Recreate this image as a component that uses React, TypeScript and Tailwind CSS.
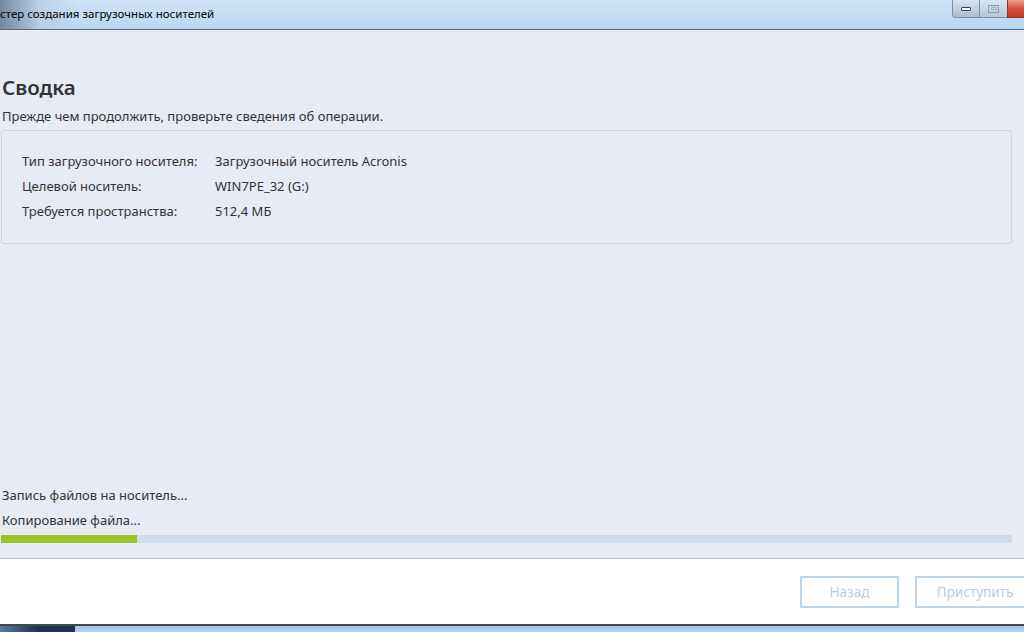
import React from 'react'

const rows = [
  { label: 'Тип загрузочного носителя:', value: 'Загрузочный носитель Acronis' },
  { label: 'Целевой носитель:', value: 'WIN7PE_32 (G:)' },
  { label: 'Требуется пространства:', value: '512,4 МБ' },
]

function TitleBar() {
  return (
    <div className="relative flex h-[30px] shrink-0 items-center border-b border-[#5b6a7c] bg-gradient-to-b from-[#cfe4f7] to-[#b9d7f2]">
      <div className="absolute inset-y-0 left-0 w-[80px] bg-gradient-to-r from-[#4f6580] via-[#b4cbe2] to-transparent opacity-70" />
      <span className="relative -mt-[1px] text-[11.5px] text-black">стер создания загрузочных носителей</span>
      <div className="absolute right-0 top-0 flex h-[18px]">
        <div className="flex w-[27px] items-center justify-center rounded-bl-[4px] border-b border-l border-[#7d8ea3] bg-gradient-to-b from-[#d7e6f3] to-[#a9bdd1]">
          <div className="h-[4px] w-[10px] rounded-[1px] border border-[#34475c] bg-white" />
        </div>
        <div className="flex w-[28px] items-center justify-center border-b border-l border-[#7d8ea3] bg-gradient-to-b from-[#d7e6f3] to-[#b4c6d8]">
          <div className="flex h-[8px] w-[11px] items-center justify-center border border-[#8d9db0]">
            <div className="h-[3px] w-[6px] border border-[#a5b3c3]" />
          </div>
        </div>
        <div className="w-[17px] border-b border-l border-[#8a3a2a] bg-gradient-to-b from-[#e8a08e] via-[#d4503a] to-[#c23a24]" />
      </div>
    </div>
  )
}

export default function App() {
  return (
    <div
      className="flex h-[632px] w-[1024px] flex-col overflow-hidden bg-[#e7ebf4] text-[#333]"
      style={{ fontFamily: '"Noto Sans", "Open Sans", sans-serif' }}
    >
      <TitleBar />

      <div className="flex min-h-0 flex-1 flex-col border-b border-[#b9bec6] pr-[12px]">
        <h1 className="mt-[43px] pl-[2px] text-[20.5px] font-semibold leading-[28px] text-[#333]">Сводка</h1>
        <p className="mt-[7px] pl-[2px] text-[13px] leading-[17px] text-[#333]">
          Прежде чем продолжить, проверьте сведения об операции.
        </p>

        <div className="ml-[1px] mt-[5px] flex h-[114px] flex-col gap-[7px] rounded-[3px] border border-[#d2d6dc] px-[20px] pt-[21px]">
          {rows.map((r) => (
            <div key={r.label} className="flex text-[13px] leading-[18px] text-[#333]">
              <span className="w-[193px]">{r.label}</span>
              <span>{r.value}</span>
            </div>
          ))}
        </div>

        <div className="flex-1" />

        <div className="pl-[2px] text-[13px] leading-[18px]">Запись файлов на носитель...</div>
        <div className="mt-[7px] pl-[2px] text-[13px] leading-[18px]">Копирование файла...</div>
        <div className="ml-[1px] mt-[6px] mb-[15px] h-[8px] bg-[#d0dbec]">
          <div className="h-full bg-[#9cc22a]" style={{ width: '136px' }} />
        </div>
      </div>

      <div className="flex h-[65px] shrink-0 items-start justify-end gap-[16px] bg-white pt-[17px]">
        <button className="h-[32px] w-[99px] border-2 border-[#bed4ec] text-[13.5px] text-[#bccce5]">Назад</button>
        <button className="-mr-[11px] h-[32px] w-[120px] shrink-0 border-2 border-[#bed4ec] text-[13.5px] text-[#bccce5]">
          Приступить
        </button>
      </div>

      <div className="relative h-[8px] shrink-0 border-t-2 border-[#3e4a58] bg-gradient-to-b from-[#9ec4ea] to-[#b6d5f2]">
        <div className="absolute inset-y-0 left-0 w-[75px] bg-gradient-to-r from-[#5c7da0] via-[#1d3352] to-[#1d3352]" />
      </div>
    </div>
  )
}
